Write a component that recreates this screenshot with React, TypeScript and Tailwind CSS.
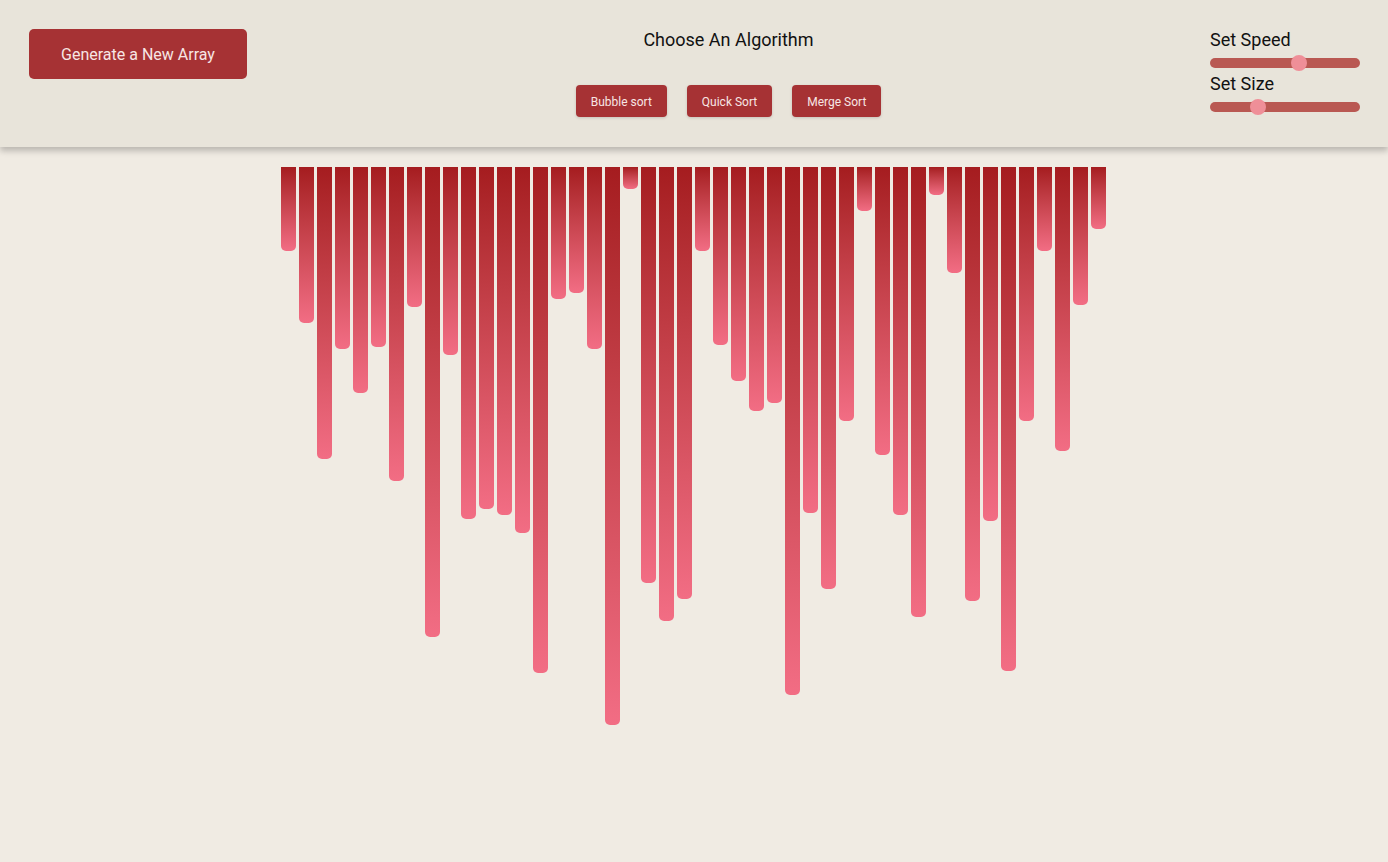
const bottoms = [
  251, 323, 459, 349, 393, 347, 481, 307, 637, 355, 519, 509, 515, 533, 673, 299,
  293, 349, 725, 189, 583, 621, 599, 251, 345, 381, 411, 403, 695, 513, 589, 421,
  211, 455, 515, 617, 195, 273, 601, 521, 671, 421, 251, 451, 305, 229,
];
const heights = bottoms.map((b) => b - 167);

function SortButton({ label }: { label: string }) {
  return (
    <button className="h-8 rounded-[4px] bg-[#a63234] px-[15px] pt-px text-xs text-[#f7e6e4] shadow-[0_1px_3px_rgba(0,0,0,0.15)]">
      {label}
    </button>
  );
}

function Slider({ label, pos }: { label: string; pos: number }) {
  return (
    <div className="flex flex-col">
      <span className="text-lg leading-[22px] text-[#111]">{label}</span>
      <div className="relative mt-[7px] h-[10px] w-[150px] rounded-full bg-[#b95852]">
        <div
          className="absolute top-[-3px] h-4 w-4 rounded-full bg-[#ef8f98]"
          style={{ left: pos - 8 }}
        />
      </div>
    </div>
  );
}

export default function App() {
  return (
    <div className="min-h-[862px] bg-[#f0ebe3] font-['Roboto',sans-serif]">
      <header className="relative z-10 flex h-[147px] items-start justify-between bg-[#e8e4da] pl-[29px] pr-[28px] pt-[29px] shadow-[0_4px_6px_rgba(0,0,0,0.22)]">
        <button className="h-[50px] w-[218px] rounded-[5px] bg-[#a63234] pt-[2px] text-base text-[#f7e6e4]">
          Generate a New Array
        </button>
        <div className="flex flex-col items-center">
          <h2 className="text-lg leading-[22px] text-[#111]">Choose An Algorithm</h2>
          <div className="mt-[34px] flex gap-5">
            <SortButton label="Bubble sort" />
            <SortButton label="Quick Sort" />
            <SortButton label="Merge Sort" />
          </div>
        </div>
        <div className="flex flex-col gap-[5px]">
          <Slider label="Set Speed" pos={89} />
          <Slider label="Set Size" pos={48} />
        </div>
      </header>
      <main className="flex items-start justify-center gap-[3px] pr-px pt-5">
        {heights.map((h, i) => (
          <div
            key={i}
            className="w-[15px] rounded-b-[5px] bg-gradient-to-b from-[#a51c1f] to-[#f26d84]"
            style={{ height: h }}
          />
        ))}
      </main>
    </div>
  );
}
